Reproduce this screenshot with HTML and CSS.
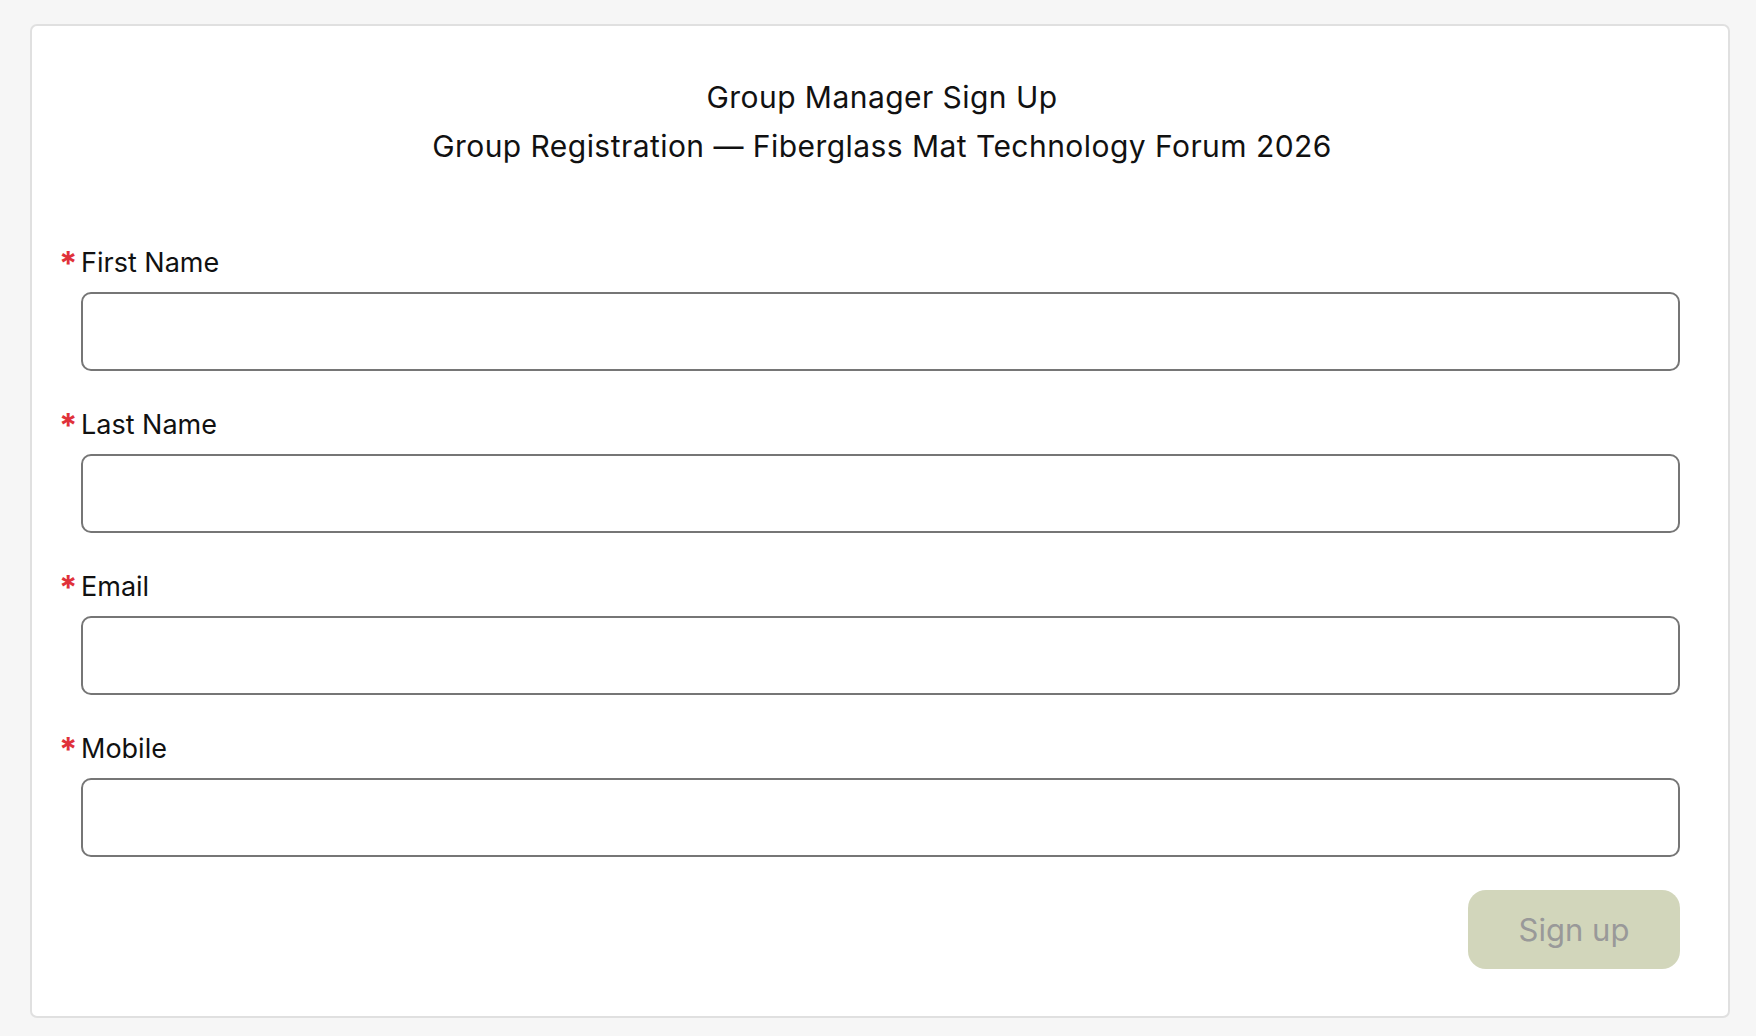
FILE: index.html
```html
<!DOCTYPE html>
<html lang="en">
<head>
<meta charset="utf-8">
<title>Group Manager Sign Up</title>
<link rel="stylesheet" href="styles.css">
</head>
<body>
<div class="page">
  <form class="card">
    <div class="heading">
      <div class="heading-line">Group Manager Sign Up</div>
      <div class="heading-line">Group Registration — Fiberglass Mat Technology Forum 2026</div>
    </div>
    <div class="fields">
      <div class="field">
        <label class="label"><span class="req">*</span>First Name</label>
        <input class="input" type="text">
      </div>
      <div class="field">
        <label class="label"><span class="req">*</span>Last Name</label>
        <input class="input" type="text">
      </div>
      <div class="field">
        <label class="label"><span class="req">*</span>Email</label>
        <input class="input" type="email">
      </div>
      <div class="field">
        <label class="label"><span class="req">*</span>Mobile</label>
        <input class="input" type="tel">
      </div>
    </div>
    <div class="actions">
      <button class="submit" type="button" disabled>Sign up</button>
    </div>
  </form>
</div>
</body>
</html>
```
FILE: styles.css
```css
* { box-sizing: border-box; }
html, body { margin: 0; padding: 0; }
body {
  background: #f6f6f6;
  font-family: Inter, "Liberation Sans", sans-serif;
  color: #111;
}
.page {
  padding: 24px 26px 17px 30px;
}
.card {
  background: #fff;
  border: 2px solid #e0e0e0;
  border-radius: 7px;
  padding: 47px 48px 47px 28px;
}
.heading {
  text-align: center;
  font-size: 30px;
  letter-spacing: 0.45px;
  line-height: 49px;
  margin: 0 -16px 77px 8px;
}
.fields {
  display: flex;
  flex-direction: column;
  gap: 39px;
}
.field {
  display: flex;
  flex-direction: column;
  gap: 14px;
}
.label {
  display: flex;
  align-items: flex-start;
  font-size: 27px;
  line-height: 30px;
}
.req {
  color: #e0313a;
  font-weight: 700;
  font-size: 33px;
  line-height: 30px;
  width: 21px;
  flex: none;
  margin-left: -1px;
  margin-right: 1px;
}
.input {
  margin-left: 21px;
  height: 79px;
  border: 2px solid #767676;
  border-radius: 10px;
  background: #fff;
  font-family: inherit;
  font-size: 26px;
  padding: 0 16px;
}
.actions {
  display: flex;
  justify-content: flex-end;
  margin-top: 33px;
}
.submit {
  width: 212px;
  height: 79px;
  border: none;
  border-radius: 18px;
  background: #d2d6bb;
  color: #999;
  font-family: inherit;
  font-size: 31px;
  cursor: default;
}
```
